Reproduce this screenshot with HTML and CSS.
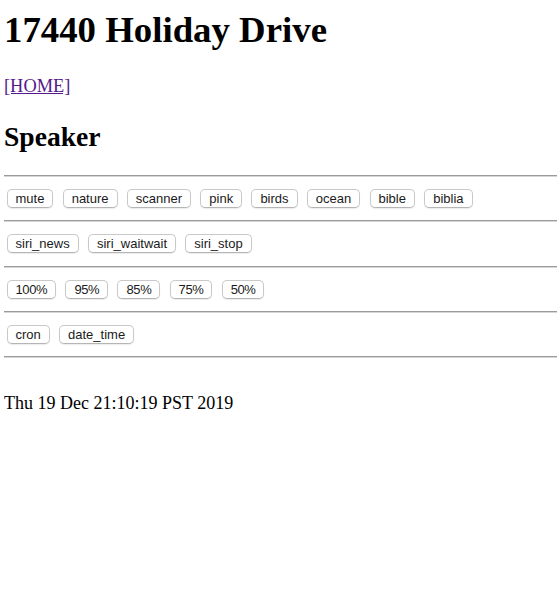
FILE: index.html
```html
<!DOCTYPE html>
<html>
<head>
<meta charset="utf-8">
<title>17440 Holiday Drive</title>
<link rel="stylesheet" href="styles.css">
</head>
<body>
<h1 class="title">17440 Holiday Drive</h1>
<p class="home"><a class="home-link" href="#">[HOME]</a></p>
<h2 class="section">Speaker</h2>
<hr class="rule">
<div class="row">
  <button class="btn">mute</button>
  <button class="btn">nature</button>
  <button class="btn">scanner</button>
  <button class="btn">pink</button>
  <button class="btn">birds</button>
  <button class="btn">ocean</button>
  <button class="btn">bible</button>
  <button class="btn">biblia</button>
</div>
<hr class="rule">
<div class="row">
  <button class="btn">siri_news</button>
  <button class="btn">siri_waitwait</button>
  <button class="btn">siri_stop</button>
</div>
<hr class="rule">
<div class="row">
  <button class="btn num">100%</button>
  <button class="btn num">95%</button>
  <button class="btn num">85%</button>
  <button class="btn num">75%</button>
  <button class="btn num">50%</button>
</div>
<hr class="rule">
<div class="row">
  <button class="btn">cron</button>
  <button class="btn">date_time</button>
</div>
<hr class="rule">
<p class="date">Thu 19 Dec 21:10:19 PST 2019</p>
</body>
</html>
```

FILE: styles.css
```css
html, body {
  background: #ffffff;
}

body {
  margin: 0 0 0 4px;
  font-family: "Liberation Serif", "Times New Roman", serif;
  font-size: 18.4px;
  color: #000000;
}

.title {
  font-size: 36.8px;
  line-height: 42px;
  font-weight: bold;
  margin: 9px 0 25px;
}

.home {
  margin: 0 0 24px;
  line-height: 21px;
}

.home-link {
  color: #551a8b;
  text-decoration: underline;
}

.section {
  font-size: 27.6px;
  line-height: 31px;
  font-weight: bold;
  margin: 0 0 23px;
}

.rule {
  margin: 0;
  height: 0;
  border: none;
  border-top: 1px solid #9b9b9b;
  border-bottom: 1px solid #d6d6d6;
}

.row {
  display: flex;
  align-items: center;
  gap: 9.25px;
  height: 43.33px;
  padding-left: 2.5px;
}

.btn {
  font-family: "Liberation Sans", Arial, sans-serif;
  font-size: 13px;
  color: #1a1a1a;
  background: #ffffff;
  border: 1px solid #c9c9c9;
  border-bottom-color: #b5b5b5;
  border-radius: 5px;
  box-shadow: 0 1px 1px rgba(0, 0, 0, 0.08);
  height: 19px;
  padding: 0 8px;
  margin: 0;
  line-height: 17px;
}

.num {
  letter-spacing: -0.4px;
}

.date {
  font-size: 18px;
  margin: 35px 0 0;
  line-height: 21px;
}
```
